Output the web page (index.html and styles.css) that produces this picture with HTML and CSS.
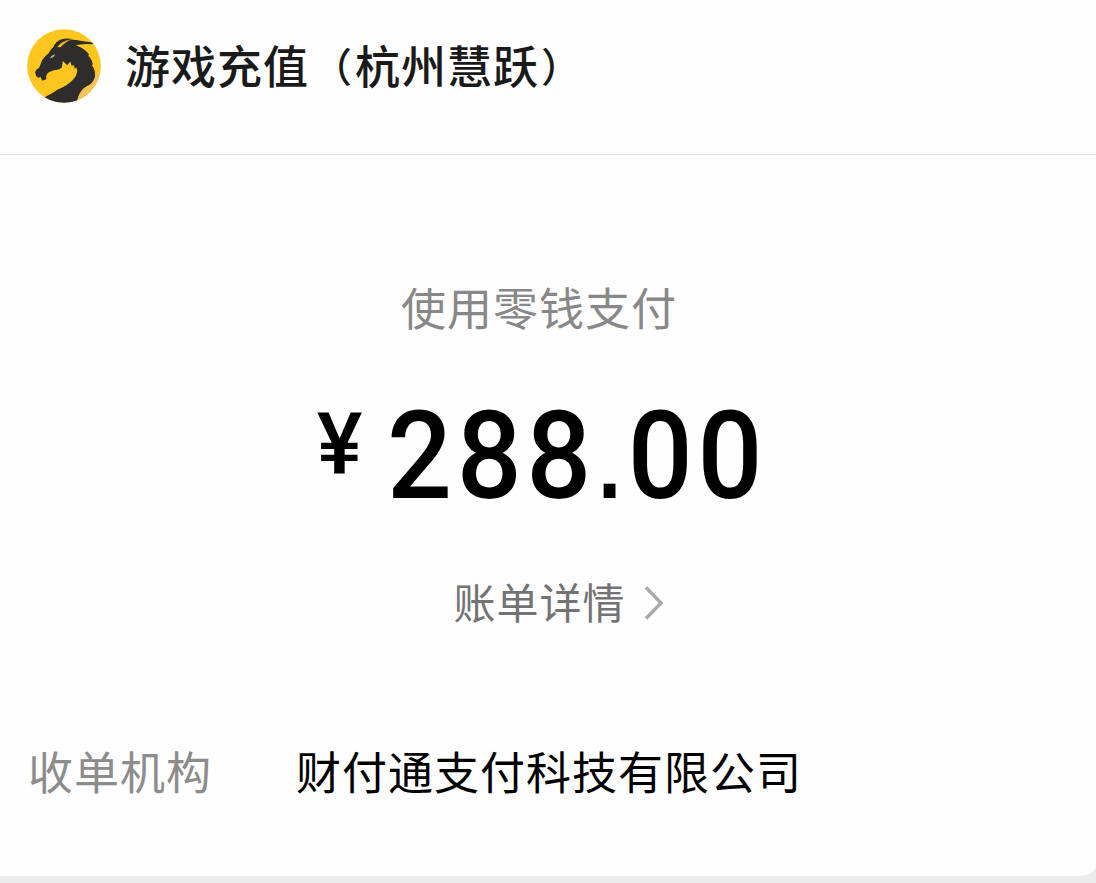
FILE: index.html
```html
<!DOCTYPE html>
<html lang="zh-CN">
<head>
    <meta charset="UTF-8">
    <meta name="viewport" content="width=device-width, initial-scale=1.0">
    <title>游戏充值</title>
    <link rel="stylesheet" href="styles.css">
</head>
<body>
    <div class="card">
        <!-- 商户 -->
        <div class="header">
            <svg class="logo" viewBox="22 24 219 219">
                <defs>
                    <clipPath id="round"><circle cx="131.5" cy="133.5" r="109"/></clipPath>
                </defs>
                <g clip-path="url(#round)">
                    <rect x="22" y="24" width="219" height="219" fill="#fcc61f"/>
                    <path d="M165 243 Q172 212 198 197 Q222 184 225 160 L250 150 L250 243Z" fill="#f3c25a"/>
                    <path d="M46 151 Q49 143 58 139 L67 116 Q75 104 86 96 Q94 78 110 72 Q130 62 151 64 L172 74 Q196 84 206 100 L203 103 Q214 112 217 130 L213 130 Q226 146 223 166 Q218 186 195 196 Q176 206 168 246 L60 246 L78 224 Q96 216 112 204 Q144 190 158 174 Q169 163 171 148 L168 138 L163 142 L161 131 L154 133 L150 120 L141 131 L128 119 L125 138 Q117 147 104 145 L88 151 Q80 155 79 163 L79 173 L67 177 L62 166 L55 168 L49 163Z" fill="#2f2d2b"/>
                    <path d="M106 90 Q112 70 134 61 Q151 54 172 57 Q192 61 218 64 L217 69 Q184 66 163 73 L140 88Z" fill="#2f2d2b"/>
                    <path d="M98 94 Q97 67 120 56 Q137 50 160 54 Q132 56 120 68 Q109 77 108 93Z" fill="#2f2d2b"/>
                    <path d="M111 78 Q123 62 149 57 Q130 66 122 77Z" fill="#fcc61f"/>
                    <path d="M90 111 Q93 102 105 99 Q103 109 90 111Z" fill="#a9b7a4"/>
                </g>
            </svg>
            <h1 class="title">游戏充值<span class="paren open">（</span>杭州慧跃<span class="paren">）</span></h1>
        </div>

        <!-- 支付金额 -->
        <div class="payment">
            <p class="method">使用零钱支付</p>
            <p class="amount"><span class="currency">¥</span><span class="number">288<span class="dot">.</span>00</span></p>
            <a class="detail">
                账单详情
                <svg class="arrow" viewBox="0 0 20 34"><path d="M2 1.5 L17 17 L2 32.5"/></svg>
            </a>
        </div>

        <!-- 收单机构 -->
        <div class="row">
            <span class="label">收单机构</span>
            <span class="value">财付通支付科技有限公司</span>
        </div>
    </div>
</body>
</html>
```

FILE: styles.css
```css
body {
    margin: 0;
    height: 883px;
    overflow: hidden;
    font-family: "Noto Sans CJK SC", sans-serif;
    background-color: #ececec;
}
.card {
    height: 876px;
    background-color: #fefefe;
    border-bottom-right-radius: 16px 10px;
}
.header {
    display: flex;
    align-items: flex-start;
    box-sizing: border-box;
    height: 155px;
    padding: 29px 27px 0;
    border-bottom: 1px solid #e5e5e5;
}
.logo {
    width: 74px;
    height: 74px;
    margin-right: 24px;
}
.title {
    margin: 6px 0 0;
    font-size: 45px;
    font-weight: 500;
    letter-spacing: 1px;
    line-height: 60px;
    color: #1a1a1a;
}
.paren {
    font-size: 40px;
    letter-spacing: 0;
    line-height: 0;
    margin-left: 2px;
    vertical-align: 2px;
}
.paren.open {
    margin: 0 3px 0 3px;
}
.payment {
    display: flex;
    flex-direction: column;
    align-items: center;
    height: 545px;
    padding-right: 18px;
}
.method {
    margin: 122px 0 0;
    font-size: 45px;
    letter-spacing: 1px;
    line-height: 60px;
    color: #888;
}
.amount {
    display: flex;
    align-items: flex-start;
    margin: 57px 0 0;
    height: 124px;
    font-family: Roboto, sans-serif;
    font-weight: 500;
    color: #000;
}
.currency {
    margin-right: 25px;
    font-size: 86px;
    line-height: 102px;
}
.number {
    margin-right: -35px;
    font-size: 123px;
    letter-spacing: 5px;
    line-height: 124px;
    transform: scaleX(0.93);
    transform-origin: left;
}
.dot {
    margin: 0 -4px;
    font-family: "Liberation Sans", sans-serif;
    font-size: 134px;
    font-weight: 400;
    line-height: 0;
}
.detail {
    display: flex;
    align-items: center;
    margin: 53px 0 0 39px;
    font-size: 42px;
    letter-spacing: 1px;
    line-height: 60px;
    color: #737373;
}
.arrow {
    width: 20px;
    height: 34px;
    margin: 4px 0 0 18px;
    fill: none;
    stroke: #aaa;
    stroke-width: 3.5;
}
.row {
    display: flex;
    padding: 41px 28px 0;
    font-size: 45px;
    letter-spacing: 1px;
    line-height: 60px;
}
.label {
    width: 268px;
    color: #8c8c8c;
}
.value {
    color: #000;
}
```
